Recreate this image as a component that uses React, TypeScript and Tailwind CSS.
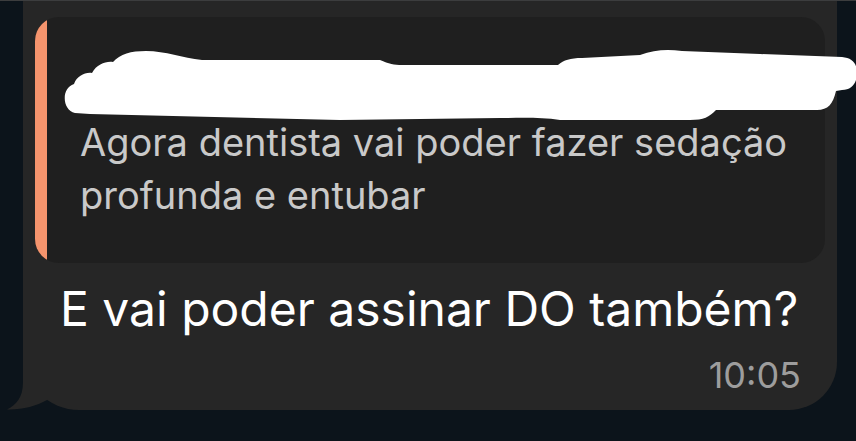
import React from 'react'

// redaction scribble drawn over the quoted sender name
const scribble =
  'M75,113 C62,110 61,88 74,84 C77,76 85,72 92,73 C97,64 106,61 113,62 C120,54 131,51 146,51 C166,51 182,58 202,60 L380,60 C389,64 394,65 402,65 L558,65 C564,60 570,58 582,58 L640,55 C654,50 666,49 682,51 L760,54 L842,57 C853,58 857,64 857,73 C857,83 852,90 842,90 L836,91 C833,104 828,110 817,110 L716,110 C709,117 704,120 690,120 L560,120 C540,117 520,118 500,118 L340,120 L90,114 Z'

export default function App() {
  return (
    <div className="relative flex h-[441px] w-[856px] flex-col overflow-hidden bg-[#0c141b] font-['Inter',sans-serif]">
      <div className="h-px bg-[#3c3d3e]" />
      <div className="flex">
        <div className="relative ml-[23px] flex h-[409px] w-[814px] flex-col rounded-br-[48px] rounded-bl-[56px] bg-[#262626] px-[12px] pt-[16px]">
          <div className="flex h-[246px] overflow-hidden rounded-[24px] bg-[#1f1f1f]">
            <div className="w-[12px] shrink-0 bg-[#f5946d]" />
            <div className="flex flex-col pl-[33px] pt-[99px]">
              <p className="text-[38px] leading-[53px] text-[#c9c9c9]">
                Agora dentista vai poder fazer sedação
                <br />
                profunda e entubar
              </p>
            </div>
          </div>

          <p className="mt-[18px] pl-[25px] text-[48px] leading-[56px] text-white">E vai poder assinar DO também?</p>

          <div className="mt-[18px] flex justify-end pr-[24px]">
            <span className="text-[36px] leading-[40px] text-[#9d9d9d]">10:05</span>
          </div>

          {/* bubble tail */}
          <svg className="absolute bottom-0 left-[-16px]" width="41" height="56" viewBox="0 0 41 56">
            <path d="M16,0 L16,28 C16,44 9,51 0,55.5 C15,56 29,52 40,46 L40,0 Z" fill="#262626" />
          </svg>
        </div>
      </div>

      <svg className="pointer-events-none absolute inset-0" width="856" height="441" viewBox="0 0 856 441">
        <path d={scribble} fill="#ffffff" />
      </svg>
    </div>
  )
}
